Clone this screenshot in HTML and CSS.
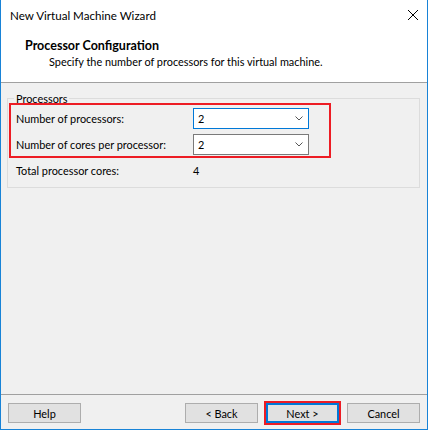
FILE: index.html
```html
<!DOCTYPE html>
<html>
<head>
<meta charset="utf-8">
<title>New Virtual Machine Wizard</title>
<link rel="stylesheet" href="styles.css">
</head>
<body>
<div class="window">
  <div class="titlebar">
    <span class="title">New Virtual Machine Wizard</span>
    <svg class="close" width="10" height="10" viewBox="0 0 10 10"><path d="M0 0L10 10M10 0L0 10" stroke="#000" stroke-width="1" fill="none"/></svg>
  </div>
  <div class="header">
    <div class="h-title">Processor Configuration</div>
    <div class="h-sub">Specify the number of processors for this virtual machine.</div>
  </div>
  <div class="content">
    <div class="group">
      <span class="legend">Processors</span>
      <div class="highlight">
        <div class="grid">
          <span class="label">Number of processors:</span>
          <div class="combo focused"><span>2</span><svg width="8" height="5" viewBox="0 0 8 5"><path d="M0.5 0.5L4 4L7.5 0.5" stroke="#555" stroke-width="1" fill="none"/></svg></div>
          <span class="label">Number of cores per processor:</span>
          <div class="combo"><span>2</span><svg width="8" height="5" viewBox="0 0 8 5"><path d="M0.5 0.5L4 4L7.5 0.5" stroke="#555" stroke-width="1" fill="none"/></svg></div>
        </div>
      </div>
      <div class="total">
        <span>Total processor cores:</span>
        <span>4</span>
      </div>
    </div>
  </div>
  <div class="footer">
    <button class="btn">Help</button>
    <div class="right">
      <button class="btn">&lt; Back</button>
      <button class="btn default">Next &gt;</button>
      <button class="btn">Cancel</button>
    </div>
  </div>
</div>
</body>
</html>
```
FILE: styles.css
```css
html, body {
  margin: 0;
  padding: 0;
}
body {
  font-family: "Lato", "Liberation Sans", sans-serif;
  font-size: 10.9px;
  color: #000;
  background: #fff;
}
.window {
  width: 428px;
  height: 430px;
  box-sizing: border-box;
  border: 1px solid #1883d7;
  border-top: none;
  display: flex;
  flex-direction: column;
  background: #f0f0f0;
}
.titlebar {
  height: 30px;
  flex: none;
  background: #fff;
  display: flex;
  align-items: center;
  justify-content: space-between;
  padding: 0 9px 0 9px;
}
.title {
  font-size: 11.6px;
  line-height: 15px;
}
.close {
  display: block;
}
.header {
  flex: none;
  height: 53px;
  box-sizing: border-box;
  background: #fff;
  border-bottom: 1px solid #a0a0a0;
  padding: 8px 0 0 24px;
}
.h-title {
  font-weight: bold;
  font-size: 12.5px;
  line-height: 15px;
}
.h-sub {
  line-height: 15px;
  margin-top: 1px;
  padding-left: 24px;
}
.content {
  flex: 1;
  padding-top: 15px;
}
.group {
  position: relative;
  margin: 0 7px 0 6px;
  border: 1px solid #dcdcdc;
  padding: 4px 0 9px 1px;
}
.legend {
  position: absolute;
  top: -8px;
  left: 6px;
  padding: 0 2px;
  line-height: 15px;
  background: #f0f0f0;
}
.highlight {
  position: relative;
  width: 322px;
  box-sizing: border-box;
  border: 2px solid #ed1c24;
  padding: 3px 0 1px 5px;
}
.grid {
  display: grid;
  grid-template-columns: 177px 116px;
  grid-auto-rows: 21px;
  row-gap: 5px;
  align-items: center;
}
.label {
  line-height: 15px;
}
.combo {
  height: 21px;
  box-sizing: border-box;
  background: #fff;
  border: 1px solid #7a7a7a;
  display: flex;
  align-items: center;
  justify-content: space-between;
  padding: 0 5px 0 4px;
}
.combo svg {
  display: block;
}
.combo.focused {
  border-color: #0078d7;
}
.total {
  display: grid;
  grid-template-columns: 177px 1fr;
  line-height: 15px;
  margin-top: 5px;
  padding-left: 7px;
}
.footer {
  flex: none;
  height: 35px;
  box-sizing: border-box;
  border-top: 1px solid #a0a0a0;
  display: flex;
  justify-content: space-between;
  align-items: flex-start;
  padding: 8px 7px 0 7px;
}
.right {
  display: flex;
  gap: 8px;
}
.btn {
  width: 73px;
  height: 20px;
  box-sizing: border-box;
  margin: 0;
  padding: 0;
  font-family: inherit;
  font-size: 10.9px;
  color: #000;
  background: #e1e1e1;
  border: 1px solid #adadad;
  border-radius: 0;
}
.btn.default {
  border: 2px solid #0078d7;
  outline: 2px solid #ed1c24;
}
```
